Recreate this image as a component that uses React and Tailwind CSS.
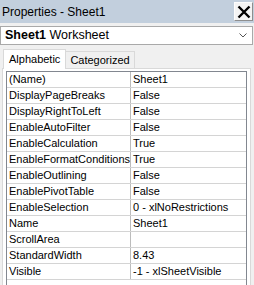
const rows = [
  ["(Name)", "Sheet1"],
  ["DisplayPageBreaks", "False"],
  ["DisplayRightToLeft", "False"],
  ["EnableAutoFilter", "False"],
  ["EnableCalculation", "True"],
  ["EnableFormatConditionsCalculation", "True"],
  ["EnableOutlining", "False"],
  ["EnablePivotTable", "False"],
  ["EnableSelection", "0 - xlNoRestrictions"],
  ["Name", "Sheet1"],
  ["ScrollArea", ""],
  ["StandardWidth", "8.43"],
  ["Visible", "-1 - xlSheetVisible"],
];

export default function App() {
  return (
    <div className="w-[254px] h-[285px] overflow-hidden bg-[#f0f0f0] text-black font-['Liberation_Sans',Arial,sans-serif] flex flex-col">
      {/* title bar */}
      <div className="h-[23px] bg-[#c2cfdd] flex items-center justify-between pl-[2px] pr-[1px] shrink-0">
        <span className="text-[12px] leading-none">Properties - Sheet1</span>
        <div className="w-[19px] h-[19px] bg-[#f4f4f4] border border-[#8e8e8e] border-t-[#fdfdfd] border-l-[#fdfdfd] flex items-center justify-center">
          <svg width="14" height="14" viewBox="0 0 14 14">
            <path d="M1.5 1.5 L12.5 12.5 M12.5 1.5 L1.5 12.5" stroke="#000" strokeWidth="2.4" />
          </svg>
        </div>
      </div>

      {/* object dropdown */}
      <div className="mt-[3px] w-[253px] h-[19px] bg-white border border-[#a9a9a9] flex items-center justify-between pl-[4px] pr-[5px] shrink-0">
        <span className="text-[12.5px] leading-none">
          <b>Sheet1</b> Worksheet
        </span>
        <svg width="8" height="5" viewBox="0 0 8 5">
          <path d="M0.5 0.5 L4 4 L7.5 0.5" stroke="#555" fill="none" strokeWidth="1" />
        </svg>
      </div>

      {/* tabs */}
      <div className="mt-[3px] flex items-end pl-[3px] h-[20px] shrink-0">
        <div className="h-[20px] px-[5px] bg-white border border-b-0 border-[#d9d9d9] flex items-center text-[11px] relative z-10 -mb-px">
          Alphabetic
        </div>
        <div className="h-[17px] px-[4px] bg-[#f0f0f0] border border-l-0 border-[#d9d9d9] border-b-0 flex items-center text-[11px]">
          Categorized
        </div>
      </div>

      {/* page */}
      <div className="ml-[2px] w-[249px] flex-1 bg-white border border-[#d9d9d9] border-b-0 pt-[2px] px-[3px]">
        <div className="h-full border border-[#828790] border-b-0 bg-white">
          {rows.map(([name, value]) => (
            <div key={name} className="flex h-[16px] border-b border-[#d4d4d4] text-[11px] leading-none">
              <div className="w-[124px] shrink-0 border-r border-[#bcbcbc] pl-[2px] flex items-center overflow-hidden whitespace-nowrap">
                {name}
              </div>
              <div className="flex-1 pl-[2px] flex items-center whitespace-nowrap overflow-hidden">
                {value}
              </div>
            </div>
          ))}
        </div>
      </div>
    </div>
  );
}
